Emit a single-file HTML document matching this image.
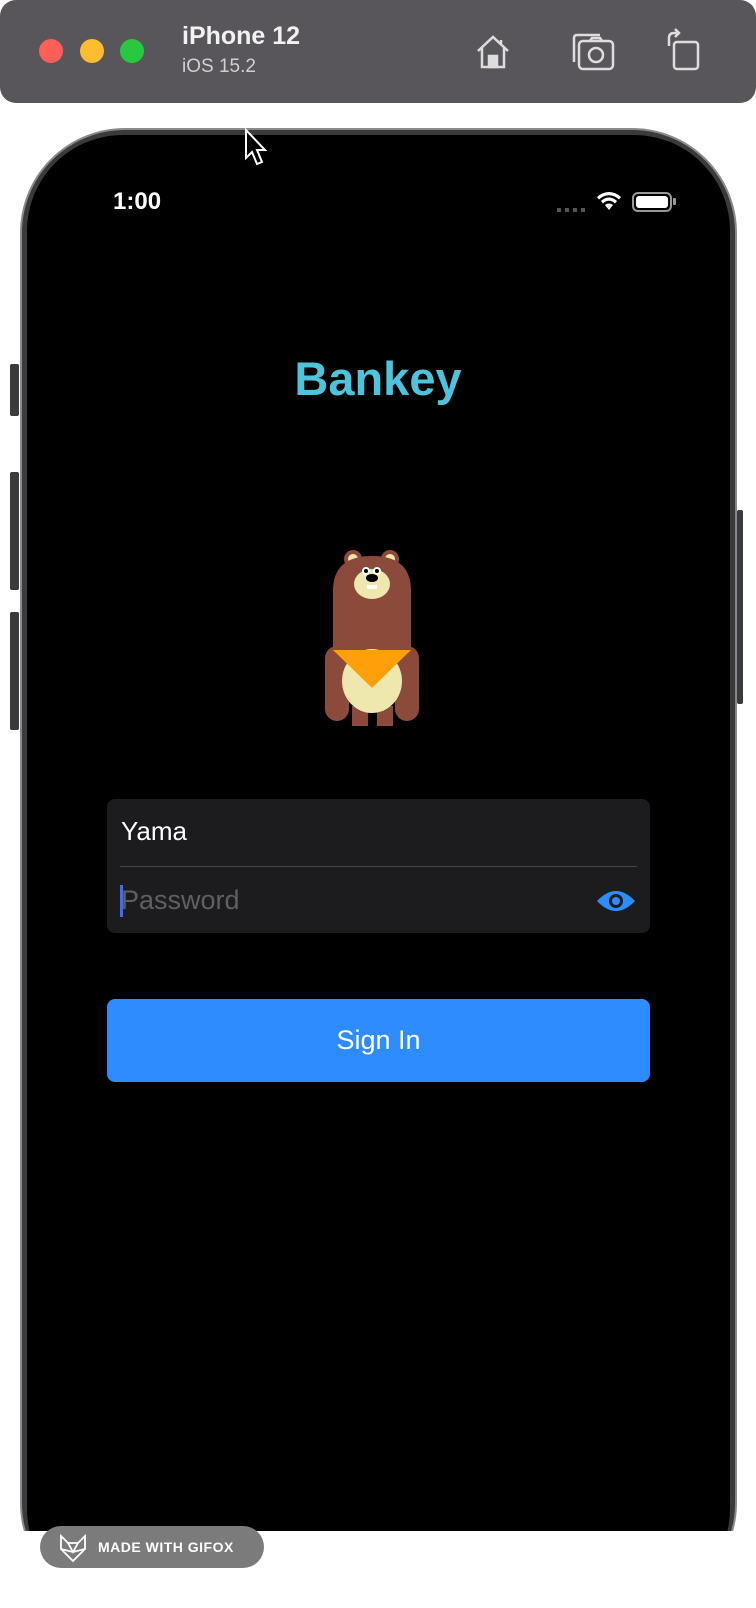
<!DOCTYPE html>
<html><head><meta charset="utf-8"><style>
*{margin:0;padding:0;box-sizing:border-box}
body{width:756px;height:1608px;background:#fff;position:relative;overflow:hidden;font-family:"Liberation Sans",sans-serif}
.tb{position:absolute;left:0;top:0;width:756px;height:103px;background:#58565b;border-radius:16px}
.dot{position:absolute;top:39px;width:24px;height:24px;border-radius:50%}
.abs{position:absolute}
.phone{position:absolute;left:20px;top:128px;width:717px;height:1480px;border-radius:105px;background:#3a3a3c;border:2px solid #8a8a8c}
.screen{position:absolute;left:27px;top:135px;width:703px;height:1470px;border-radius:96px;background:#000}
.btn{position:absolute;background:#3a3a3c;width:9px;left:10px;border-radius:2px}
</style></head><body>
<div class="tb">
 <div class="dot" style="left:39px;background:#fe5f57"></div>
 <div class="dot" style="left:80px;background:#febc2e"></div>
 <div class="dot" style="left:120px;background:#28c840"></div>
 <div class="abs" style="left:182px;top:22px;color:#f2f2f2;font-size:25px;font-weight:bold">iPhone 12</div>
 <div class="abs" style="left:182px;top:56px;color:#d0d0d0;font-size:19px">iOS 15.2</div>
 <svg class="abs" style="left:472px;top:30px" width="42" height="42" viewBox="0 0 42 42" fill="none" stroke="#ddd" stroke-width="2.5"><path d="M6 21 L21 7 L36 21 M10 18 V37 H32 V18 M29 10 V15"/><rect x="17" y="26" width="8" height="11" fill="#ddd"/></svg>
 <svg class="abs" style="left:570px;top:32px" width="46" height="40" viewBox="0 0 46 40" fill="none" stroke="#ddd" stroke-width="2.5"><path d="M4 30 V6 Q4 3 7 3 H30"/><rect x="9" y="9" width="34" height="28" rx="4"/><circle cx="26" cy="23" r="7"/><path d="M20 9 L22 6 H30 L32 9"/></svg>
 <svg class="abs" style="left:664px;top:28px" width="40" height="44" viewBox="0 0 40 44" fill="none" stroke="#ddd" stroke-width="2.5"><rect x="10" y="14" width="24" height="27" rx="3"/><path d="M5 18 V10 Q5 5 10 5 H14 M11 1 L15 5 L11 9"/></svg>
</div>
<div class="btn" style="top:364px;height:52px"></div>
<div class="btn" style="top:472px;height:118px"></div>
<div class="btn" style="top:612px;height:118px"></div>
<div class="abs" style="left:737px;top:510px;width:6px;height:194px;background:#3a3a3c;border-radius:2px"></div>
<div class="phone"></div>
<div class="screen"></div>
<div class="abs" style="left:0;top:1531px;width:756px;height:77px;background:#fff"></div>
<svg class="abs" style="left:244px;top:128px" width="26" height="40" viewBox="0 0 26 40"><path d="M2 2 V30 L8 24 L13 36 L18 34 L13 22 H21 Z" fill="#000" stroke="#fff" stroke-width="2"/></svg>
<div class="abs" style="left:113px;top:188px;color:#fff;font-size:24px;font-weight:bold">1:00</div>
<div class="abs" style="left:557px;top:208px;width:30px;height:4px;background:repeating-linear-gradient(90deg,#555 0 4px,transparent 4px 8px)"></div>
<svg class="abs" style="left:596px;top:191px" width="26" height="20" viewBox="0 0 26 20"><path d="M13 19 L9 14 A6 6 0 0 1 17 14 Z M5 10 A11 11 0 0 1 21 10 L19 12.5 A8 8 0 0 0 7 12.5 Z M1 6 A17 17 0 0 1 25 6 L23 8.5 A14 14 0 0 0 3 8.5 Z" fill="#fff"/></svg>
<div class="abs" style="left:632px;top:192px;width:40px;height:20px;border:2px solid #999;border-radius:6px;padding:2px"><div style="width:100%;height:100%;background:#fff;border-radius:3px"></div></div>
<div class="abs" style="left:673px;top:198px;width:3px;height:7px;background:#999;border-radius:1px"></div>
<div class="abs" style="left:0;width:756px;top:351px;text-align:center;color:#4ec3dc;font-size:47px;font-weight:bold">Bankey</div>
<svg class="abs" style="left:322px;top:546px" width="100" height="180" viewBox="0 0 100 180">
 <circle cx="31" cy="13" r="9" fill="#8b4a3a"/><circle cx="31" cy="13" r="5" fill="#eee7ae"/>
 <circle cx="68" cy="13" r="9" fill="#8b4a3a"/><circle cx="68" cy="13" r="5" fill="#eee7ae"/>
 <path d="M11 45 Q11 10 50 10 Q89 10 89 45 V105 H11 Z" fill="#8b4a3a"/>
 <rect x="3" y="100" width="24" height="75" rx="12" fill="#8b4a3a"/>
 <rect x="73" y="100" width="24" height="75" rx="12" fill="#8b4a3a"/>
 <rect x="30" y="160" width="16" height="20" fill="#8b4a3a"/><rect x="55" y="160" width="16" height="20" fill="#8b4a3a"/>
 <ellipse cx="50" cy="135" rx="30" ry="32" fill="#eee7ae"/>
 <path d="M11 104 H89 L50 142 Z" fill="#ffa00a"/>
 <ellipse cx="50" cy="38" rx="18" ry="15" fill="#eee7ae"/>
 <circle cx="44" cy="25" r="4" fill="#fff"/><circle cx="55" cy="25" r="4" fill="#fff"/>
 <circle cx="44" cy="25" r="2" fill="#000"/><circle cx="55" cy="25" r="2" fill="#000"/>
 <ellipse cx="50" cy="32" rx="6" ry="4" fill="#000"/>
 <rect x="45" y="39" width="10" height="4" fill="#fff"/>
</svg>
<div class="abs" style="left:107px;top:799px;width:543px;height:134px;background:#1c1c1e;border-radius:8px"></div>
<div class="abs" style="left:120px;top:866px;width:517px;height:1px;background:#48484a"></div>
<div class="abs" style="left:121px;top:816px;color:#fff;font-size:26px">Yama</div>
<div class="abs" style="left:120px;top:885px;width:3px;height:32px;background:#3b6cff"></div>
<div class="abs" style="left:121px;top:885px;color:#5f5f64;font-size:27px">Password</div>
<svg class="abs" style="left:596px;top:889px" width="40" height="24" viewBox="0 0 40 24"><path d="M1 12 Q20 -8 39 12 Q20 32 1 12 Z" fill="#2d8cff"/><circle cx="20" cy="12" r="7" fill="#1c1c1e"/><circle cx="20" cy="12" r="4" fill="#2d8cff"/></svg>
<div class="abs" style="left:107px;top:999px;width:543px;height:83px;background:#2f8cff;border-radius:8px;color:#fff;font-size:27px;text-align:center;line-height:83px">Sign In</div>
<div class="abs" style="left:40px;top:1526px;width:224px;height:42px;background:#7b7b7b;border-radius:21px;color:#fff;font-size:14px;font-weight:bold;line-height:42px;padding-left:58px;letter-spacing:0.5px">MADE WITH GIFOX</div>
<svg class="abs" style="left:57px;top:1532px" width="32" height="32" viewBox="0 0 32 32" fill="none" stroke="#fff" stroke-width="1.8"><path d="M4 4 L11 11 H21 L28 4 V17 L16 29 L4 17 Z M4 17 L16 20 L28 17 M11 11 L16 20 L21 11"/></svg>
</body></html>
